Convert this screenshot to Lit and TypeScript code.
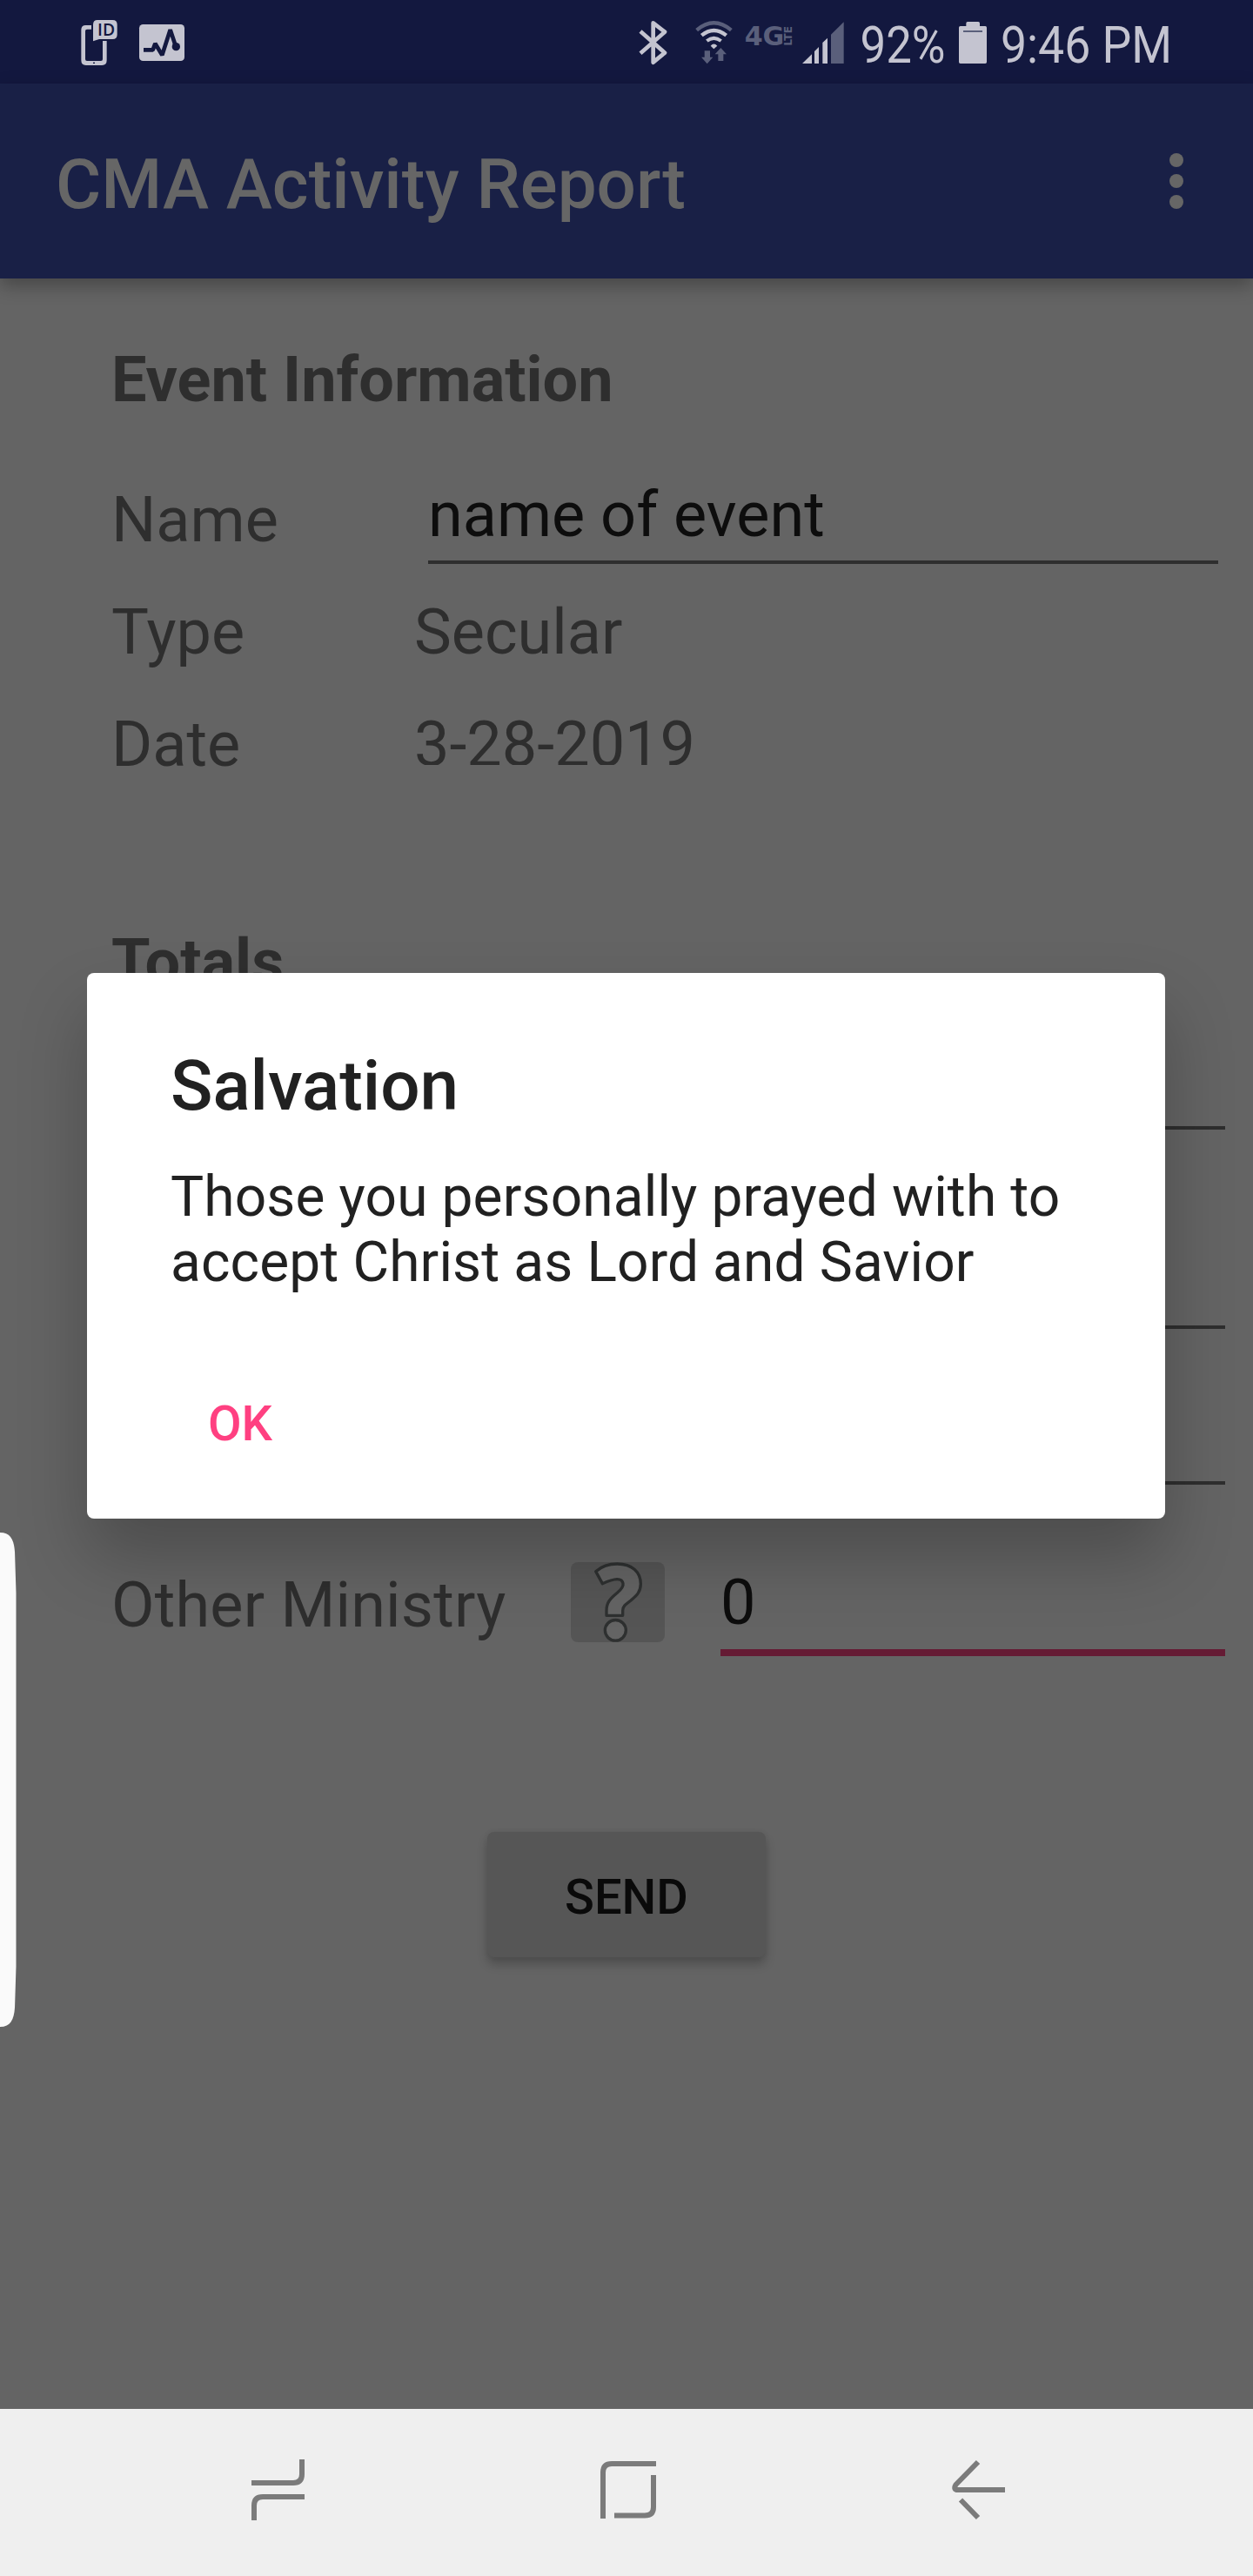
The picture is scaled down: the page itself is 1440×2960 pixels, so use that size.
import { LitElement, html, css, svg } from "lit";
import { customElement, property } from "lit/decorators.js";

const icon = (viewBox: string, width: number, height: number, body: unknown) => html`
  <svg class="icon" viewBox=${viewBox} width=${width} height=${height}>${body}</svg>
`;

@customElement("status-bar")
class StatusBar extends LitElement {
  static styles = css`
    :host {
      display: flex;
      justify-content: space-between;
      height: 96px;
      padding: 0 96px 0 93px;
      background: #13183f;
    }
    .group { display: flex; }
    .left { gap: 25px; }
    .icon { display: block; overflow: visible; flex: none; }
    .lit { fill: #c4c4d0; }
    .dim { fill: #5a5f7b; }
    .cut { fill: #13183f; }
    .stroke { fill: none; stroke: #c4c4d0; }
    .stroke-cut { fill: none; stroke: #13183f; }
    .stroke-dim { fill: none; stroke: #5a5f7b; }
    .label { font-family: Roboto, sans-serif; font-size: 60px; fill: #c4c4d0; }
    .id { font-family: "Open Sans", sans-serif; font-weight: 600; font-size: 58px; fill: #13183f; }
    .net { font-family: "DejaVu Sans", sans-serif; font-weight: 700; fill: #5a5f7b; }
    .wifi { margin-left: 33px; }
    .network { margin-left: 14px; }
    .signal { margin-left: 11px; }
    .percent { margin-left: 20px; }
    .battery { margin-left: 17px; }
    .clock { margin-left: 18px; }
  `;

  render() {
    return html`
      <div class="group left">
        ${icon("99 0 126 288", 42, 96, svg`
          <path class="lit" fill-rule="evenodd" d="M116 87H135V101H120Q114 101 114 107V204Q114 210 120 210H168Q174 210 174 204V141H188V208Q188 225 172 225H116Q100 225 100 208V103Q100 87 116 87Z" />
          <path class="lit" d="M156 69H208Q224 69 224 85V119Q224 135 208 135H162L141 142V85Q141 69 156 69Z" />
          <rect class="cut" x="141" y="215" width="6" height="4" />
          <text class="id" x="156" y="123" textLength="60" lengthAdjust="spacingAndGlyphs">ID</text>
        `)}
        ${icon("300 0 156 288", 52, 96, svg`
          <rect class="lit" x="300" y="84" width="156" height="126" rx="13" />
          <path class="stroke-cut" stroke-width="14" stroke-linejoin="bevel" d="M315 172H347L355 150L379 190L407 103L426 160" />
          <circle class="cut" cx="427" cy="161" r="14" />
        `)}
      </div>
      <div class="group">
        ${icon("102 0 96 288", 32, 96, svg`
          <path class="stroke" stroke-width="14" stroke-linejoin="round" d="M108 108L192 182L152 215V79L192 110L108 184" />
        `)}
        <div class="wifi">
          ${icon("297 0 129 288", 43, 96, svg`
            <path class="stroke-dim" stroke-width="13" d="M302 104Q361 54 421 104" />
            <path class="stroke" stroke-width="13" d="M319 122Q361 88 404 122" />
            <path class="stroke" stroke-width="12" d="M337 141Q361 122 386 141" />
            <path class="lit" d="M350 158Q361 145 373 158L361 169Z" />
            <path class="dim" d="M329 175H348V197H358L338 220L318 197H329Z" />
            <path class="dim" d="M376 210H394V187H405L385 165L365 187H376Z" />
          `)}
        </div>
        <div class="network">
          ${icon("468 0 165 288", 55, 96, svg`
            <text class="net" font-size="90" x="467" y="156" textLength="137" lengthAdjust="spacingAndGlyphs">4G</text>
            <text class="net" font-size="36" transform="translate(631 158) rotate(-90)" textLength="68" lengthAdjust="spacingAndGlyphs">LTE</text>
          `)}
        </div>
        <div class="signal">
          ${icon("666 0 144 288", 48, 96, svg`
            <path class="lit" d="M666 219L699 187V219ZM708 219V177L723 162V219ZM736 219V147L753 131V219Z" />
            <path class="dim" d="M765 219V119L809 76V219Z" />
          `)}
        </div>
        <div class="percent">
          ${icon("0 0 95 96", 95, 96, svg`
            <text class="label" x="-1.5" y="72" textLength="98" lengthAdjust="spacingAndGlyphs">92%</text>
          `)}
        </div>
        <div class="battery">
          ${icon("306 0 96 288", 32, 96, svg`
            <path class="lit" d="M331 90V80Q331 75 336 75H373Q378 75 378 80V90H397Q402 90 402 95V214Q402 219 397 219H311Q306 219 306 214V95Q306 90 311 90Z" />
            <rect class="dim" x="321" y="105" width="66" height="6" />
          `)}
        </div>
        <div class="clock">
          ${icon("0 0 192 96", 192, 96, svg`
            <text class="label" x="-2" y="72" textLength="197" lengthAdjust="spacingAndGlyphs">9:46 PM</text>
          `)}
        </div>
      </div>
    `;
  }
}

@customElement("title-bar")
class TitleBar extends LitElement {
  static styles = css`
    :host {
      display: flex;
      align-items: center;
      justify-content: space-between;
      box-sizing: border-box;
      height: 224px;
      padding: 0 80px 0 64px;
      background: #192046;
      box-shadow: 0 8px 20px rgba(0, 0, 0, 0.3);
      color: #666;
      font: 500 80px/94px Roboto, sans-serif;
    }
    .title { padding-top: 8px; }
    .menu { display: flex; flex-direction: column; gap: 8px; }
    .dot { width: 16px; height: 16px; border-radius: 50%; background: #666; }
  `;

  @property() heading = "";

  render() {
    return html`
      <span class="title">${this.heading}</span>
      <div class="menu"><i class="dot"></i><i class="dot"></i><i class="dot"></i></div>
    `;
  }
}

@customElement("alert-dialog")
class AlertDialog extends LitElement {
  static styles = css`
    :host {
      display: flex;
      flex-direction: column;
      align-items: flex-start;
      box-sizing: border-box;
      height: 627px;
      padding: 83px 90px 0 96px;
      border-radius: 8px;
      background: #fff;
      box-shadow: 0 44px 80px rgba(0, 0, 0, 0.24);
      color: #212121;
      font-family: Roboto, sans-serif;
    }
    .title { font-size: 80px; font-weight: 500; line-height: 94px; }
    .message { margin-top: 43px; font-size: 64px; line-height: 75px; letter-spacing: 0.13px; white-space: pre-line; }
    .action { margin: 115px 0 0 43px; color: #ff4081; font-size: 56px; font-weight: 500; line-height: 66px; }
  `;

  @property() heading = "";
  @property() message = "";

  render() {
    return html`
      <div class="title">${this.heading}</div>
      <div class="message">${this.message}</div>
      <div class="action">OK</div>
    `;
  }
}

@customElement("nav-bar")
class NavBar extends LitElement {
  static styles = css`
    :host {
      position: relative;
      display: flex;
      justify-content: space-between;
      height: 192px;
      padding: 0 285px 0 289px;
      background: #efefef;
    }
    .icon { display: block; overflow: visible; fill: none; stroke: #7b7b7b; stroke-width: 6; }
  `;

  render() {
    return html`
      ${icon("289 2768 61 192", 61, 192, svg`
        <path d="M347 2826V2843Q347 2853 337 2853H289M350 2869H302Q292 2869 292 2879V2896" />
      `)}
      ${icon("689 2768 64 192", 64, 192, svg`
        <path d="M692 2894V2841Q692 2831 702 2831H753M750 2844V2881Q750 2890.5 740 2890.5H705" />
      `)}
      ${icon("1094 2768 61 192", 61, 192, svg`
        <path d="M1124 2829L1098.500 2855Q1095 2861 1101 2861H1155M1104 2872.500L1124 2893" />
      `)}
    `;
  }
}

@customElement("app-root")
class AppRoot extends LitElement {
  static styles = css`
    :host {
      position: relative;
      display: flex;
      flex-direction: column;
      width: 1440px;
      height: 2960px;
      overflow: hidden;
      background: #646464;
      color: #2e2e2e;
      font: 400 72px/85px Roboto, sans-serif;
    }
    .form {
      flex: 1;
      display: flex;
      flex-direction: column;
      padding: 74px 32px 0 128px;
    }
    .heading { font-weight: 700; }
    .row { display: grid; grid-template-columns: 348px 1fr; }
    .name { margin-top: 70px; margin-right: 8px; grid-template-columns: 364px 1fr; }
    .name .caption { padding-top: 6px; }
    .type { margin-top: 36px; }
    .date { margin-top: 44px; }
    .date .value { height: 66px; overflow: hidden; }
    .totals { margin-top: 165px; }
    .input {
      box-sizing: border-box;
      color: #0d0d0d;
      border-bottom: 4px solid #2e2e2e;
    }
    .name .input { height: 99px; }
    .total { align-self: flex-end; width: 580px; }
    .salvation { height: 150px; }
    .rededication { height: 229px; }
    .seeds { height: 179px; }
    .other {
      margin-top: 89px;
      grid-template-columns: 528px 172px 580px;
      height: 108px;
    }
    .other .caption { padding-top: 7px; letter-spacing: 0.2px; }
    .other .input { padding: 4px 0 0; border-bottom: 8px solid #651b34; }
    .help {
      width: 108px;
      height: 92px;
      border-radius: 8px;
      background: rgba(0, 0, 0, 0.14);
    }
    .icon { display: block; fill: #646464; stroke: #2e3030; stroke-width: 10; stroke-linejoin: round; }
    .send {
      align-self: center;
      margin: 202px 0 0 -96px;
      width: 320px;
      height: 144px;
      border-radius: 8px;
      background: #565656;
      box-shadow: 0 8px 12px rgba(0, 0, 0, 0.22), 0 0 6px rgba(0, 0, 0, 0.06);
      color: #0a0a0a;
      font-size: 56px;
      font-weight: 500;
      line-height: 150px;
      text-align: center;
    }
    .dialog { position: absolute; left: 100px; top: 1118px; width: 1239px; }
    .edge-panel { position: absolute; left: 0; top: 1761px; }
    .edge-panel .icon { fill: #fafafa; stroke: none; }
  `;

  render() {
    return html`
      <status-bar></status-bar>
      <title-bar heading="CMA Activity Report"></title-bar>
      <div class="form">
        <div class="heading">Event Information</div>
        <div class="row name"><span class="caption">Name</span><div class="input">name of event</div></div>
        <div class="row type"><span>Type</span><div class="value">Secular</div></div>
        <div class="row date"><span>Date</span><div class="value">3-28-2019</div></div>
        <div class="heading totals">Totals</div>
        <div class="input total salvation"></div>
        <div class="input total rededication"></div>
        <div class="input total seeds"></div>
        <div class="row other">
          <span class="caption">Other Ministry</span>
          <div class="help">
            ${icon("348 75 324 276", 108, 92, svg`
              <path d="M434 107C455 89 480 81 508 81C560 81 589 110 589 150C589 178 575 190 555 207C535 222 527 228 527 242V259H471V242C471 213 485 200 508 181C523 168 530 158 528 148C524 128 500 130 457 149Z" />
              <ellipse cx="502" cy="310" rx="36" ry="35.500" />
            `)}
          </div>
          <div class="input">0</div>
        </div>
        <div class="send">SEND</div>
      </div>
      <alert-dialog
        class="dialog"
        heading="Salvation"
        message=${"Those you personally prayed with to\naccept Christ as Lord and Savior"}
      ></alert-dialog>
      <div class="edge-panel">
        ${icon("0 0 19 568", 19, 568, svg`
          <path d="M0 0C12 0 16 8 17 22L18.500 70V498L17 546C16 560 12 568 0 568Z" />
        `)}
      </div>
      <nav-bar></nav-bar>
    `;
  }
}
